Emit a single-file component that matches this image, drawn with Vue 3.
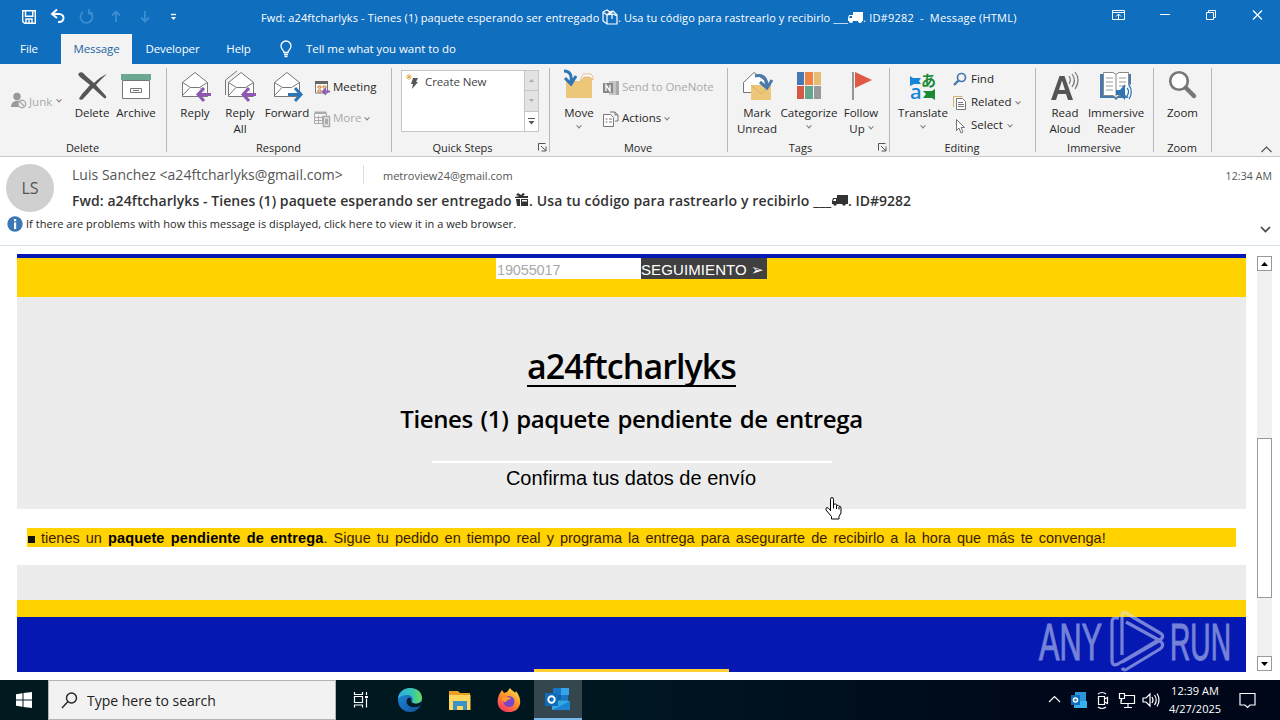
<script setup>
import { ref } from 'vue'

const tracking = ref('19055017')
const tabs = ['File', 'Message', 'Developer', 'Help']
const activeTab = ref('Message')
</script>

<template>
  <div class="screen">
    <header class="titlebar">
      <div class="quick">
        <svg width="180" height="34" viewBox="0 0 180 34" fill="none" stroke="#fff" stroke-width="1.4">
          <path d="M22.7 10.7h12.6v12.6H24.5l-1.8-1.8z M25.5 11v5.3h7.3V11 M26 23v-4h6v4 M29 20v3" />
          <path d="M57 9.5l-5 4.5 5 4M52.5 14h6.500c6 0 6 8 0 8h-1" stroke-width="2" />
          <g stroke="#3c8ed3" stroke-width="1.8">
            <path d="M83 12a6 6 0 1 0 6-.5M89 9v4.5h4" />
            <path d="M116 22V12M112 15.5l4-4 4 4" />
            <path d="M145 11v10M141 17.500l4 4 4-4" />
          </g>
          <path d="M171 14.500h5" /><path d="M171 17h5l-2.500 3z" fill="#fff" stroke="none" />
        </svg>
      </div>
      <div class="title">
        <span class="title-a">Fwd: a24ftcharlyks - Tienes (1) paquete esperando ser entregado</span>
        <svg width="16" height="16" viewBox="0 0 16 16" fill="none" stroke="#fff" stroke-width="1.2"><path d="M1 3l4-2 3 2 3-1 4 4v9H5l-4-3zM1 3l4 3v9M5 6l6-1 4 2M8 3l-3 3M11 2l-4 4M10 5v5" /></svg>
        <span class="title-b">. Usa tu código para rastrearlo y recibirlo ___</span>
        <svg width="15" height="14" viewBox="0 0 15 14" fill="#fff"><path d="M5 2h10v9H5zM1 5h4v6H0V8z" /><path d="M2 6h2v2H1z" fill="#106ebe" /><circle cx="3" cy="11" r="2" /><circle cx="12" cy="11" r="2" /></svg>
        <span class="title-c">. ID#9282 &nbsp;-&nbsp; Message (HTML)</span>
      </div>
      <div class="winbtns">
        <svg width="160" height="34" viewBox="0 0 160 34" fill="none" stroke="#fff" stroke-width="1">
          <path d="M.5 10.500h12v9H.5zM.5 12.500h12M6.500 19v-5M4 16.500l2.500-2.500L9 16.500" />
          <path d="M48 14.500h10" />
          <path d="M94.500 12.500h7v7h-7zM96.500 12v-1.500h7v7H102" />
          <path d="M141 10.500l9 9M150 10.500l-9 9" stroke-width="1.200" />
        </svg>
      </div>
    </header>

    <nav class="tabs">
      <div v-for="tab in tabs" :key="tab" class="tab" :class="[tab.toLowerCase(), { active: tab === activeTab }]" @click="activeTab = tab">
        <span>{{ tab }}</span>
      </div>
      <svg class="bulb" width="14" height="18" viewBox="0 0 14 18" fill="none" stroke="#fff" stroke-width="1.300"><path d="M5 12.500c0-2.500-3-3-3-6.500a5 5 0 0 1 10 0c0 3.500-3 4-3 6.500zM5 14.500h4M5.500 16.500h3" /></svg>
      <span class="tell">Tell me what you want to do</span>
    </nav>

    <section class="ribbon">
      <div class="group g-delete">
        <div class="body">
          <div class="junk off">
            <svg width="17" height="18" viewBox="0 0 17 18"><circle cx="6" cy="4.500" r="3.700" fill="#999" /><path d="M0 15c0-8 12-8 11-1l-3 1z" fill="#999" /><circle cx="11" cy="12" r="3.700" fill="#f3f3f3" stroke="#aaa" stroke-width="1.400" /><path d="M8.500 9.500l5 5" stroke="#aaa" stroke-width="1.400" /></svg>
            <span>Junk</span><i class="chev"></i>
          </div>
          <div class="big b-del">
            <svg viewBox="0 0 32 32"><path d="M3 3c3-2 5 1 7 3l8 7c4-4 8-7 13-9-4 4-8 7-11 11l10 11c1 2-1 3-2 2L17 18c-4 4-7 8-10 11-3 2-5 0-3-2 3-5 7-8 10-12L4 7C2 5 2 4 3 3z" fill="#555" /></svg>
            <span>Delete</span>
          </div>
          <div class="big b-arc">
            <svg viewBox="0 0 32 32"><path d="M2.500 10.500h27v18h-27z" fill="#fff" stroke="#777" /><path d="M1 4h30v6H1z" fill="#6aa88f" /><path d="M10.500 18.500h11v4h-11z" fill="#fff" stroke="#777" /><path d="M13 20.500h6" stroke="#777" /></svg>
            <span>Archive</span>
          </div>
        </div>
        <div class="caption">Delete</div>
      </div>

      <div class="group g-respond">
        <div class="body">
          <div class="big b-reply">
            <svg viewBox="0 0 32 32"><path d="M3.500 12.500L16 2.500l12.500 10v14h-25z" fill="#fff" stroke="#777" /><path d="M3.500 12.500l8 5h9l8-5M11 17.500l-7.500 8M21 17.500l4 4" fill="none" stroke="#777" /><path d="M32 24.500H19M25 18l-6 6.500 6 6.500" fill="none" stroke="#8e57b5" stroke-width="3" /></svg>
            <span>Reply</span>
          </div>
          <div class="big b-all">
            <svg viewBox="0 0 32 32"><path d="M1.500 25V10L13 1" fill="none" stroke="#777" /><path d="M4.500 12.500L17 2.500l12.500 10v14h-25z" fill="#fff" stroke="#777" /><path d="M4.500 12.500l8 5h9l8-5M12 17.500l-7.500 8M22 17.500l4 4" fill="none" stroke="#777" /><path d="M32 24.500H19M25 18l-6 6.500 6 6.500" fill="none" stroke="#8e57b5" stroke-width="3" /></svg>
            <span>Reply<br>All</span>
          </div>
          <div class="big b-fwd">
            <svg viewBox="0 0 32 32"><path d="M3.500 12.500L16 2.500l12.500 10v14h-25z" fill="#fff" stroke="#777" /><path d="M3.500 12.500l8 5h9l8-5M11 17.500l-7.500 8" fill="none" stroke="#777" /><path d="M17 24.500h13M24 18l6 6.500-6 6.500" fill="none" stroke="#2e75b6" stroke-width="3" /></svg>
            <span>Forward</span>
          </div>
          <div class="rows two r-meet">
            <div class="row">
              <svg width="17" height="16" viewBox="0 0 17 16"><path d="M1.500 3h12v10h-12z" fill="#fff" stroke="#777" /><path d="M1 1h13v3H1z" fill="#666" /><path d="M4 6h3v2H4zm5 0h3v2H9zM4 10h3v2H4z" fill="none" stroke="#d07a35" /><path d="M16 11.500H9M12 8.500l-3 3 3 3" fill="none" stroke="#8e57b5" stroke-width="2" /></svg>
              <span class="meeting">Meeting</span>
            </div>
            <div class="row off">
              <svg width="17" height="16" viewBox="0 0 17 16" fill="none" stroke="#aaa"><path d="M.5 2.500h12v10H.5zM4.500 5v8M8.500 5v8M1 6.500h8M1 9.500h8" /><path d="M.5 1.500h12" stroke-width="2" /><path d="M9.500 5.500h6v10h-6z" fill="#eee" stroke-width="1.500" /><path d="M11.500 8h2v5h-2z" fill="#aaa" /></svg>
              <span>More</span><i class="chev"></i>
            </div>
          </div>
        </div>
        <div class="caption">Respond</div>
      </div>

      <div class="group g-quick">
        <div class="body">
          <div class="gallery">
            <div class="create">
              <svg width="14" height="16" viewBox="0 0 14 16"><path d="M7 4h5l-2 4h2l-6 7 1-5H5z" fill="#555" /><path d="M3 0v6M0 3h6M1 1l4 4M5 1L1 5" stroke="#dda74a" stroke-width=".9" /></svg>
              <span>Create New</span>
            </div>
            <div class="spin">
              <div><svg width="7" height="5"><path d="M1 4l2.500-3L6 4z" fill="#aaa" /></svg></div>
              <div><svg width="7" height="5"><path d="M1 1l2.500 3L6 1z" fill="#aaa" /></svg></div>
              <div class="more"><svg width="7" height="8"><path d="M0 1.500h7" stroke="#555" /><path d="M.5 4h6l-3 3.500z" fill="#555" /></svg></div>
            </div>
          </div>
        </div>
        <div class="caption">Quick Steps</div>
        <svg class="launcher" width="9" height="9" viewBox="0 0 9 9" fill="none" stroke="#555"><path d="M.5 7.500v-7h7M3 3l4.500 4.500M8 3.500v4.500H3.500" /></svg>
      </div>

      <div class="group g-move">
        <div class="body">
          <div class="big b-move">
            <svg viewBox="0 0 32 32"><path d="M3 11h14l5-5h7v22H3z" fill="#ecc77a" /><path d="M18 8l3-4h7l2 3v3l-3-3h-6l-3 4z" fill="#fff" stroke="#e3a87a" stroke-width=".8" /><path d="M1 1c6 0 8 4 7 12M2 8l6 6 5-8" fill="none" stroke="#2e75b6" stroke-width="3" /></svg>
            <span>Move</span><i class="chev"></i>
          </div>
          <div class="rows two r-move">
            <div class="row off">
              <svg width="17" height="16" viewBox="0 0 17 16"><path d="M6 1h10v14H6z" fill="#c5c5c5" /><path d="M13 1h3v14h-3z" fill="#aaa" /><path d="M0 3h10v10H0z" fill="#888" /><path d="M3 11V5l4 6V5" fill="none" stroke="#fff" stroke-width="1.300" /></svg>
              <span class="onenote">Send to OneNote</span>
            </div>
            <div class="row">
              <svg width="17" height="16" viewBox="0 0 17 16" fill="none" stroke="#777"><path d="M.5 3.500h7l3 3v9H.5z" fill="#fff" /><path d="M2.500 8h2M6 8h3M2.500 11h2M6 11h3M7 1h5l3 3v6h-3M12 1v3h3" /></svg>
              <span>Actions</span><i class="chev"></i>
            </div>
          </div>
        </div>
        <div class="caption">Move</div>
      </div>

      <div class="group g-tags">
        <div class="body">
          <div class="big b-mark">
            <svg viewBox="0 0 32 32"><path d="M2.500 12.500L13 2.500l11 8v12h-21.500z" fill="#fff" stroke="#777" /><path d="M10 15h20v15H10z" fill="#ecc77a" /><path d="M10 15l10 9 10-9" fill="none" stroke="#d9ae60" /><path d="M14 6c8-2 12 2 12 11M19 12l7 6 5-8" fill="none" stroke="#4679ad" stroke-width="3" /></svg>
            <span>Mark<br>Unread</span>
          </div>
          <div class="big b-cat">
            <svg viewBox="0 0 32 32"><path fill="#4679b4" d="M4 2h7v13H4z" /><path fill="#ed8443" d="M12 2h8v13h-8z" /><path fill="#e7bd72" d="M21 2h7v13h-7z" /><path fill="#d65743" d="M4 16h7v13H4z" /><path fill="#65a58e" d="M12 16h8v13h-8z" /><path fill="#999" d="M21 16h7v13h-7z" /></svg>
            <span>Categorize</span><i class="chev"></i>
          </div>
          <div class="big b-fol">
            <svg viewBox="0 0 32 32"><path d="M8 2v28" stroke="#777" stroke-width="1.500" /><path d="M10 2l17 8-17 8z" fill="#e05a42" /></svg>
            <span>Follow<br>Up <i class="chev"></i></span>
          </div>
        </div>
        <div class="caption">Tags</div>
        <svg class="launcher" width="9" height="9" viewBox="0 0 9 9" fill="none" stroke="#555"><path d="M.5 7.500v-7h7M3 3l4.500 4.500M8 3.500v4.500H3.500" /></svg>
      </div>

      <div class="group g-edit">
        <div class="body">
          <div class="big b-tra">
            <svg viewBox="0 0 32 32"><path d="M3 6l3 2h8l-2 3 2 3H7l-4 2z" fill="#1684d8" /><path d="M28 19v11l-3-2h-9l3-4-3-3h9z" fill="#188a34" /><text x="14" y="16" class="kana">あ</text><text x="3" y="29" class="lat">a</text></svg>
            <span>Translate</span><i class="chev"></i>
          </div>
          <div class="rows three">
            <div class="row">
              <svg width="14" height="16" viewBox="0 0 14 16" fill="none"><circle cx="8.500" cy="5.500" r="4" stroke="#4679ad" stroke-width="1.700" /><path d="M5.500 8.500L1 13" stroke="#4679ad" stroke-width="2.400" /></svg>
              <span>Find</span>
            </div>
            <div class="row">
              <svg width="14" height="16" viewBox="0 0 14 16" fill="none" stroke="#777"><path d="M.5 12V1.500h9" stroke="#ddb070" /><path d="M3.500 3.500h6l3 3v8h-9z" fill="#fff" /><path d="M5 7.500h5M5 9.500h6M5 11.500h6" /></svg>
              <span>Related</span><i class="chev"></i>
            </div>
            <div class="row">
              <svg width="14" height="16" viewBox="0 0 14 16"><path d="M3.500 1.500v11l2.500-2.500 2 5 2-1-2-4.500h3.500z" fill="#fff" stroke="#777" /></svg>
              <span>Select</span><i class="chev"></i>
            </div>
          </div>
        </div>
        <div class="caption">Editing</div>
      </div>

      <div class="group g-imm">
        <div class="body">
          <div class="big b-read">
            <svg viewBox="0 0 32 32"><path d="M2 30L10.500 6h5L24 30h-5l-2-6H9l-2 6zM10 20h6l-3-9.500z" fill="#555" fill-rule="evenodd" /><path d="M20 6c2 3 2 5 0 8M23 4c3 4 3 9 0 13M26 2c4 5 4 11 0 17" fill="none" stroke="#777" stroke-width="1.200" /></svg>
            <span>Read<br>Aloud</span>
          </div>
          <div class="big b-imm">
            <svg viewBox="0 0 32 32"><path d="M0 4h31v24H18l-2 2-2-2H0z" fill="#4679ad" /><path d="M3.500 2.500H13l3 2 3-2h9.500v23H19l-3 2-3-2H3.500z" fill="#fff" stroke="#888" /><path d="M16 5v21" stroke="#888" /><path d="M6 8h7M6 12h7M6 16h7M6 20h7M19 8h7M19 12h7M19 16h7" stroke="#999" /><path d="M16 20h4l5-6v16l-5-5h-4z" fill="#2e75b6" /><path d="M27 18c2 2 2 5 0 8M29 15c3 4 3 10 0 14" fill="none" stroke="#fff" stroke-width="3" /><path d="M27 18c2 2 2 5 0 8M29 15c3 4 3 10 0 14" fill="none" stroke="#2e75b6" stroke-width="1.300" /></svg>
            <span>Immersive<br>Reader</span>
          </div>
        </div>
        <div class="caption">Immersive</div>
      </div>

      <div class="group g-zoom">
        <div class="body">
          <div class="big b-zoom">
            <svg viewBox="0 0 32 32"><circle cx="12" cy="11" r="8.800" fill="#fff" stroke="#777" stroke-width="2.600" /><path d="M19 18l8 8" stroke="#777" stroke-width="4.500" stroke-linecap="round" /></svg>
            <span>Zoom</span>
          </div>
        </div>
        <div class="caption">Zoom</div>
      </div>
      <svg class="collapse" width="11" height="7" fill="none" stroke="#555" stroke-width="1.200"><path d="M.5 6l5-5 5 5" /></svg>
    </section>

    <section class="mailhead">
      <div class="avatar">LS</div>
      <div class="lines">
        <div class="from">
          <span class="sender">Luis Sanchez &lt;a24ftcharlyks@gmail.com&gt;</span>
          <span class="to">metroview24@gmail.com</span>
          <span class="time">12:34 AM</span>
        </div>
        <div class="subject">
          <span class="sub-a">Fwd: a24ftcharlyks - Tienes (1) paquete esperando ser entregado</span>
          <svg width="14" height="14" viewBox="0 0 14 14" fill="#333"><path d="M0 4l4-1-3-1 2-2 3 2 2-2 2 1-2 2h5v2H0z" /><path d="M1 6h4v7H2zM6 6h7v7H6z" /><path d="M7 7h5v1.500H7z" fill="#fff" /></svg>
          <span class="sub-b">. Usa tu código para rastrearlo y recibirlo ___</span>
          <svg width="16" height="14" viewBox="0 0 16 14" fill="#333"><path d="M5 2h11v9H5zM1 5h5v6H0V8z" /><path d="M2 6h2v2H1z" fill="#fff" /><circle cx="3" cy="11" r="1.800" /><circle cx="12" cy="11" r="1.800" /></svg>
          <span class="sub-c">. ID#9282</span>
        </div>
      </div>
      <div class="info">
        <svg width="16" height="16" viewBox="0 0 16 16"><circle cx="8" cy="8" r="7.700" fill="#3b78b5" /><path d="M7 3h2.200v2.200H7zM7 6.500h2.200V13H7z" fill="#fff" /></svg>
        <span>If there are problems with how this message is displayed, click here to view it in a web browser.</span>
        <svg class="down" width="11" height="8" fill="none" stroke="#444" stroke-width="1.700"><path d="M1 1l4.500 4.500L10 1" /></svg>
      </div>
    </section>

    <main class="reader">
      <div class="mail">
        <div class="track">
          <input v-model="tracking" class="code"><span class="seg">SEGUIMIENTO <b>➢</b></span>
        </div>
        <div class="hero">
          <h1>a24ftcharlyks</h1>
          <h2>Tienes (1) paquete pendiente de entrega</h2>
          <hr>
          <p>Confirma tus datos de envío</p>
        </div>
        <div class="notice"><i class="bullet"></i><span>tienes un <b>paquete pendiente de entrega</b>. Sigue tu pedido en tiempo real y programa la entrega para asegurarte de recibirlo a la hora que más te convenga!</span></div>
        <div class="pad"></div>
        <div class="stripe"></div>
        <div class="foot"><div class="bar"></div></div>
      </div>
      <div class="scroll">
        <div class="arrow"><svg width="7" height="4"><path d="M0 4l3.500-4L7 4z" /></svg></div>
        <div class="thumb"></div>
        <div class="arrow"><svg width="7" height="4"><path d="M0 0l3.500 4L7 0z" /></svg></div>
      </div>
    </main>

    <svg class="watermark" width="200" height="64" viewBox="0 0 200 64">
      <g opacity=".52" fill="#dce3fb" stroke="#dce3fb">
        <text x="3" y="50" textLength="63" lengthAdjust="spacingAndGlyphs">ANY</text>
        <text x="134" y="50" textLength="61" lengthAdjust="spacingAndGlyphs">RUN</text>
        <path d="M83 8h-4q-3 0-3 4v38q0 7 6 4l40-24M86 45V6q0-5 4-3l34 20q4 2 2 5t-5 1L90 12M86 58q2 3 5 1l33-20q4-3 2-6t-5-1L86 52" fill="none" stroke-width="3.200" stroke-linejoin="round" />
      </g>
    </svg>

    <svg class="hand" width="17" height="23" viewBox="0 0 17 23"><path d="M5.500 14V2.500q0-2 1.500-2t1.500 2V8q.5-1.500 2-1t1 1.500q1.500-1 2.300.7 2-.5 2.200 1.800v5l-2 3.500V22H6.500v-2.500L1 13q-.7-2 1-2.500 1 0 3.500 3M8.500 8v3.500M11.500 9v3M14 10v2.500" fill="#fff" stroke="#000" /></svg>

    <footer class="taskbar">
      <div class="start"><svg width="16" height="16" viewBox="0 0 16 16" fill="#fff"><path d="M0 2.200L6.500 1.300v6.200H0zM7.500 1.100L16 0v7.500H7.500zM0 8.500h6.500v6.200L0 13.800zM7.500 8.500H16V16l-8.500-1.100z" /></svg></div>
      <div class="search">
        <svg width="17" height="17" viewBox="0 0 17 17" fill="none" stroke="#222" stroke-width="1.400"><circle cx="10.500" cy="6" r="5" /><path d="M7 9.500L1 16" /></svg>
        <span>Type here to search</span>
      </div>
      <div class="app"><svg width="18" height="18" viewBox="0 0 18 18" fill="none" stroke="#fff" stroke-width="1.200"><path d="M2.500 5.500h8v6h-8zM2.500 1v2.500h8V1M2.500 16.500v-2.500h8v2.500M14.500 1v3M14.500 7.500v9" /><path d="M13 5h3v2h-3z" fill="#fff" stroke="none" /></svg></div>
      <div class="app edge">
        <svg width="24" height="24" viewBox="0 0 24 24">
          <defs>
            <linearGradient id="eg" x1="0" x2="1"><stop offset="0" stop-color="#2daee0" /><stop offset=".6" stop-color="#36c6b0" /><stop offset="1" stop-color="#6bdc57" /></linearGradient>
            <linearGradient id="eb" y2="1"><stop offset="0" stop-color="#1d8cd8" /><stop offset="1" stop-color="#124f9d" /></linearGradient>
          </defs>
          <circle cx="12" cy="12" r="12" fill="url(#eb)" />
          <path d="M0 11C1-4 24-3 24 10c0 6-8 7-10 4 2-3 0-7-4-7-5 0-9 2-10 4z" fill="url(#eg)" />
          <path d="M10 10c-4 5 1 12 12 8 3-3 2-4 1-4-4 3-9 2-10-1 1-2-1-4-3-3z" fill="#031b25" />
        </svg>
      </div>
      <div class="app"><svg width="22" height="22" viewBox="0 0 22 22"><path d="M0 2h9l2 2h10v6H0z" fill="#e8a020" /><path d="M0 6h21.500v15H0z" fill="#ffd75e" /><path d="M4 12h14v9h-4v-4H8v4H4z" fill="#3d91c9" /></svg></div>
      <div class="app">
        <svg width="24" height="24" viewBox="0 0 24 24">
          <defs><linearGradient id="ff" x1=".8" y1="0" x2=".2" y2="1"><stop offset="0" stop-color="#ffe14a" /><stop offset=".5" stop-color="#ff8a28" /><stop offset="1" stop-color="#f5306b" /></linearGradient></defs>
          <path d="M3 5l2-3 2 3 3-1 3-4c2 3 4 3 5 5l1-2c8 10 4 21-7 21S-2 14 3 5z" fill="url(#ff)" />
          <circle cx="12" cy="13.500" r="5.500" fill="#7a45c9" /><path d="M5 10c3-2 6-1 9 0-1 2-4 1-5 4-3 0-4-2-4-4z" fill="#ff9a2a" />
        </svg>
      </div>
      <div class="app active">
        <svg width="26" height="24" viewBox="0 0 26 24"><path d="M8 1h15v14H8z" fill="#1976c5" /><path d="M16 1h8v7h-8z" fill="#35a4e8" /><path d="M8 8h8v7H8z" fill="#1160a8" /><path d="M7 13l18 1v9H7z" fill="#34a8e5" /><path d="M7 23l18-9v9z" fill="#1c83d3" /><path d="M0 6h13v13H0z" fill="#0f6cbd" /><circle cx="6.500" cy="12.500" r="3.200" fill="none" stroke="#fff" stroke-width="1.900" /></svg>
      </div>
      <div class="tray">
        <svg width="112" height="22" viewBox="0 0 112 22" fill="none" stroke="#fff" stroke-width="1.200">
          <path d="M1 13l5.500-5.500L12 13" />
          <path d="M27 3h11v10H27z" fill="#2a96dc" stroke="none" /><path d="M26 12h13v7H26z" fill="#36b0ee" stroke="none" /><path d="M23 6h9v10h-9z" fill="#0f6cbd" stroke="none" /><circle cx="27.500" cy="11" r="2" stroke-width="1.500" />
          <path d="M50.500 7.500h6v8h-6zM56.500 10l3-1.500v6l-3-1.500M50 5q4-3 8 0M50 18q4 3 8 0" />
          <path d="M76 6.500h10.500v8H73v-4M80 14.500v4M76 18.500h8M71.500 4.500h5v5h-5zM73.500 9.500v3" />
          <path d="M95 9h3l4-4v12l-4-4h-3zM104 8q2 3 0 6M106.500 6q3.500 5 0 10M109 4.500q4 6.500 0 13" />
        </svg>
        <div class="clock"><span>12:39 AM</span><span>4/27/2025</span></div>
        <svg class="note" width="17" height="17" viewBox="0 0 17 17" fill="none" stroke="#fff" stroke-width="1.200"><path d="M1 1.500h15v11.500h-5L8.500 15.500 6 13H1z" /></svg>
      </div>
    </footer>
  </div>
</template>

<style>
body {
  margin: 0;
  overflow: hidden;
}
</style>

<style scoped>
.screen {
  position: relative;
  width: 1280px;
  height: 720px;
  overflow: hidden;
  display: flex;
  flex-direction: column;
  background: #fff;
  font-family: "Open Sans", "Noto Sans", sans-serif;
  font-size: 11.5px;
  color: #262626;
  white-space: nowrap;
}

svg {
  flex: none;
  display: block;
  overflow: visible;
}

/* title bar */
.titlebar {
  height: 34px;
  display: flex;
  background: #106ebe;
  color: #fff;
}

.quick {
  width: 261px;
}

.title {
  flex: 1;
  display: flex;
  align-items: center;
  font-size: 11px;
}

.title-a {
  width: 341px;
  letter-spacing: 0.12px;
}

.title-b {
  width: 230px;
  letter-spacing: 0.09px;
}

.title-c {
  letter-spacing: 0.2px;
}

.winbtns {
  width: 168px;
}

/* tabs */
.tabs {
  height: 30px;
  display: flex;
  align-items: center;
  background: #106ebe;
  color: #fff;
}

.tab {
  box-sizing: border-box;
  height: 30px;
  padding-bottom: 2px;
  display: flex;
  align-items: center;
  justify-content: center;
  letter-spacing: -0.1px;
}

.file { width: 58px; margin-right: 3px; }
.message { width: 71px; }
.developer { width: 81px; }
.help { width: 51px; }

.active.tab {
  background: #f3f3f3;
  color: #1d64a5;
}

.bulb {
  margin-left: 15px;
}

.tell {
  margin-left: 13px;
  padding-bottom: 2px;
  letter-spacing: -0.05px;
}

/* ribbon */
.ribbon {
  height: 92px;
  display: flex;
  background: #f3f3f3;
  border-bottom: 1px solid #c8c8c8;
}

.group {
  position: relative;
  box-sizing: border-box;
  height: 92px;
  display: flex;
  flex-direction: column;
}

.group::after {
  content: "";
  position: absolute;
  right: 0;
  top: 4px;
  width: 1px;
  height: 84px;
  background: #b8b8b8;
}

.g-delete { width: 167px; }
.g-respond { width: 225px; }
.g-quick { width: 158px; }
.g-move { width: 178px; }
.g-tags { width: 162px; }
.g-edit { width: 146px; }
.g-imm { width: 118px; }
.g-zoom { width: 58px; }

.body {
  height: 76px;
  display: flex;
}

.caption {
  height: 16px;
  padding-right: 2px;
  line-height: 16px;
  text-align: center;
  font-size: 11px;
}

.g-quick .caption,
.g-tags .caption {
  padding-right: 17px;
}

.launcher {
  position: absolute;
  right: 3px;
  bottom: 4px;
}

.big {
  padding-top: 6px;
  display: flex;
  flex-direction: column;
  align-items: center;
  text-align: center;
  line-height: 16px;
}

.big > svg {
  width: 32px;
  height: 32px;
  margin-bottom: 3px;
}

.big > .chev {
  margin-top: 4px;
}

.chev {
  display: inline-block;
  width: 3px;
  height: 3px;
  border: solid #777;
  border-width: 0 1px 1px 0;
  transform: rotate(45deg) translate(-1px, -1px);
}

.b-del { width: 44px; margin-left: 6px; }
.b-arc { width: 44px; }
.b-reply { width: 46px; margin-left: 5px; }
.b-all { width: 44px; }
.b-fwd { width: 50px; }
.b-move { width: 44px; margin-left: 7px; }
.b-mark { width: 50px; margin-left: 4px; }
.b-cat { width: 54px; }
.b-fol { width: 50px; }
.b-tra { width: 50px; margin-left: 8px; }
.b-read { width: 42px; margin-left: 8px; }
.b-imm { width: 60px; }
.b-zoom { width: 57px; }

.b-fol .chev {
  margin: 0 0 3px 1px;
}

.off {
  color: #aaa;
}

.junk {
  width: 53px;
  margin-left: 11px;
  height: 74px;
  display: flex;
  align-items: center;
  gap: 1px;
}

.junk .chev {
  margin-left: 4px;
}

.rows {
  display: flex;
  flex-direction: column;
}

.row {
  display: flex;
  align-items: center;
}

.row span,
.create span {
  padding-bottom: 2px;
}

.two {
  padding-top: 8px;
}

.two .row {
  height: 31px;
  gap: 2px;
}

.r-meet { margin-left: 2px; }
.r-move { margin-left: 2px; }

.three {
  padding-top: 4px;
  margin-left: 5px;
}

.three .row {
  height: 23px;
  gap: 4px;
}

.row .chev {
  margin-left: 2px;
}

.three .chev {
  margin-left: 1px;
}

.onenote {
  letter-spacing: -0.05px;
}

.gallery {
  box-sizing: border-box;
  width: 138px;
  height: 62px;
  margin: 6px 0 0 9px;
  display: flex;
  justify-content: space-between;
  background: #fff;
  border: 1px solid #c6c6c6;
}

.create {
  height: 22px;
  padding-left: 4px;
  display: flex;
  align-items: center;
  gap: 5px;
  color: #444;
  letter-spacing: -0.1px;
}

.spin {
  width: 14px;
  display: flex;
  flex-direction: column;
}

.spin div {
  flex: 1;
  display: flex;
  align-items: center;
  justify-content: center;
  background: #e3e3e3;
  border-left: 1px solid #c6c6c6;
  border-bottom: 1px solid #c6c6c6;
}

.spin .more {
  background: #fff;
  border-bottom: 0;
}

.kana {
  font: bold 15px "Noto Sans CJK JP", sans-serif;
  fill: #188a34;
}

.lat {
  font: 600 20px "Open Sans", sans-serif;
  fill: #1684d8;
}

.collapse {
  margin: 82px 0 0 49px;
}

/* message header */
.mailhead {
  height: 88px;
  display: grid;
  grid-template-columns: 72px 1fr;
  grid-template-rows: 57px 31px;
  border-bottom: 1px solid #d5dfe8;
}

.avatar {
  width: 48px;
  height: 48px;
  margin: 7px 0 0 6px;
  border-radius: 50%;
  background: #d0d0d0;
  color: #555;
  font-size: 16px;
  line-height: 49px;
  text-align: center;
}

.from {
  height: 27px;
  margin-top: 4px;
  display: flex;
  align-items: center;
  color: #555;
  font-size: 11px;
}

.sender {
  width: 291px;
  font-size: 14px;
  letter-spacing: 0.03px;
  border-right: 1px solid #ddd;
}

.to {
  margin-left: 19px;
  padding-top: 2px;
}

.time {
  margin-left: auto;
  padding: 2px 8px 0 0;
  font-size: 10.500px;
  letter-spacing: 0.1px;
}

.subject {
  height: 24px;
  display: flex;
  align-items: center;
  font-size: 14px;
  font-weight: 600;
  color: #333;
}

.sub-a {
  width: 443px;
  letter-spacing: 0.07px;
}

.sub-b {
  width: 303px;
  letter-spacing: 0.12px;
}

.info {
  grid-column: 1 / 3;
  height: 20px;
  padding: 0 9px 0 7px;
  display: flex;
  align-items: center;
  gap: 3px;
  font-size: 11px;
  letter-spacing: 0.035px;
}

.info span {
  padding-bottom: 2px;
}

.down {
  margin: 12px 0 0 auto;
}

/* message body */
.reader {
  height: 434px;
  display: flex;
}

.mail {
  width: 1229px;
  margin: 8px 11px 0 17px;
  font-family: "Liberation Sans", Arial, sans-serif;
}

.track {
  box-sizing: border-box;
  height: 43px;
  display: flex;
  justify-content: center;
  border-top: 4px solid #0519b2;
  background: #ffd200;
  font-size: 15px;
}

.code {
  box-sizing: border-box;
  width: 145px;
  height: 21px;
  padding: 2px 1px 0;
  border: 0;
  border-radius: 0;
  outline: 0;
  background: #fff;
  color: #aaa;
  font: inherit;
  font-size: 14.500px;
  letter-spacing: -0.15px;
}

.seg {
  width: 126px;
  height: 21px;
  line-height: 23px;
  background: #404040;
  color: #fff;
  letter-spacing: 0.1px;
}

.seg b {
  font-family: "DejaVu Sans", sans-serif;
}

.hero {
  height: 212px;
  display: flex;
  flex-direction: column;
  align-items: center;
  background: #ececec;
  color: #000;
}

h1 {
  margin: 50px 0 0;
  height: 38px;
  border-bottom: 2px solid #000;
  font: 600 34px/39px "Open Sans", sans-serif;
  letter-spacing: -0.92px;
}

h2 {
  margin: 14px 0 0;
  font: 600 24px/36px "Open Sans", sans-serif;
  letter-spacing: -0.4px;
  word-spacing: 2px;
}

hr {
  width: 400px;
  height: 2px;
  margin: 24px 0 0;
  border: 0;
  background: #fff;
}

.hero p {
  margin: 3px 1px 0 0;
  font-size: 20px;
  line-height: 24px;
}

.notice {
  height: 19px;
  margin: 19px 10px 18px;
  display: flex;
  align-items: center;
  background: #ffd200;
  color: #3a1d00;
  font-size: 14.500px;
  word-spacing: 2.050px;
}

.notice b {
  color: #000;
  letter-spacing: 0.14px;
}

.bullet {
  width: 7px;
  height: 7px;
  margin: 3px 6px 0 1px;
  background: #111;
}

.pad {
  height: 35px;
  background: #ececec;
}

.stripe {
  height: 17px;
  background: #ffd200;
}

.foot {
  height: 55px;
  display: flex;
  align-items: flex-end;
  background: #0519b2;
}

.bar {
  width: 195px;
  height: 3px;
  margin-left: 517px;
  background: #ffd032;
}

.scroll {
  width: 15px;
  height: 415px;
  margin-top: 10px;
  display: flex;
  flex-direction: column;
  background: #f1f1f1;
}

.arrow {
  box-sizing: border-box;
  height: 15px;
  display: flex;
  align-items: center;
  justify-content: center;
  border: 1px solid #999;
  background: #fff;
}

.thumb {
  box-sizing: border-box;
  height: 160px;
  margin: 167px 0 58px;
  border: 1px solid #999;
  background: #fff;
}

.watermark {
  position: absolute;
  left: 1036px;
  top: 610px;
}

.watermark text {
  font: 52px "Liberation Sans", sans-serif;
}

.hand {
  position: absolute;
  left: 825px;
  top: 497px;
}

/* taskbar */
.taskbar {
  height: 40px;
  display: flex;
  background: linear-gradient(90deg, #001a20, #001620 50%, #000719 85%);
  color: #fff;
}

.start {
  width: 48px;
  display: flex;
  align-items: center;
  justify-content: center;
}

.search {
  box-sizing: border-box;
  width: 288px;
  padding-left: 12px;
  display: flex;
  align-items: center;
  gap: 9px;
  border: 1px solid #b5b5b5;
  background: #f2f2f2;
  color: #222;
  font-size: 14px;
}

.app {
  box-sizing: border-box;
  width: 49.500px;
  display: flex;
  align-items: center;
  justify-content: center;
}

.app.active {
  width: 48px;
  background: #34474f;
  border-bottom: 2px solid #76b9ed;
}

.tray {
  flex: 1;
  padding-right: 24px;
  display: flex;
  align-items: center;
  justify-content: flex-end;
}

.clock {
  width: 70px;
  display: flex;
  flex-direction: column;
  align-items: center;
  font-size: 11px;
  line-height: 18px;
}

.note {
  margin-left: 9px;
}
</style>
